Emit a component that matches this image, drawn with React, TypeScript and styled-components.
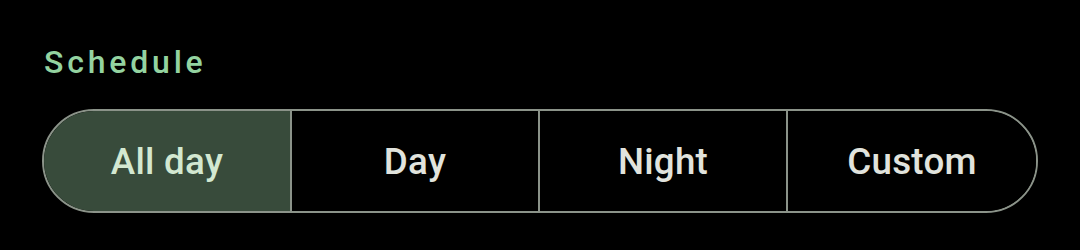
import React, { useState } from "react";
import styled, { createGlobalStyle } from "styled-components";

const Global = createGlobalStyle`
  html, body { margin: 0; padding: 0; background: #000; }
  body { font-family: Roboto, "Noto Sans", sans-serif; }
`;

const Page = styled.div`
  width: 1080px;
  height: 250px;
  background: #000;
  box-sizing: border-box;
  padding: 42px 42px 0 42px;
  display: flex;
  flex-direction: column;
`;

const Label = styled.div`
  color: #94d3a0;
  font-size: 32px;
  font-weight: 500;
  letter-spacing: 3.8px;
  line-height: 40px;
  padding-left: 2px;
  margin-bottom: 27px;
`;

const Group = styled.div`
  display: grid;
  grid-template-columns: repeat(4, 1fr);
  height: 104px;
  border: 2px solid #8b9389;
  border-radius: 52px;
  overflow: hidden;
  box-sizing: border-box;
`;

const Segment = styled.button<{ $selected: boolean; $last: boolean }>`
  appearance: none;
  border: none;
  border-right: ${(p) => (p.$last ? "none" : "2px solid #8b9389")};
  margin: 0;
  padding: 0;
  background: ${(p) => (p.$selected ? "#384b3b" : "#000")};
  color: ${(p) => (p.$selected ? "#d3e8d1" : "#e1e3dd")};
  font-family: Roboto, "Noto Sans", sans-serif;
  font-size: 36.75px;
  font-weight: 500;
  letter-spacing: 0.26px;
  cursor: pointer;
  display: flex;
  align-items: center;
  justify-content: center;
`;

const options = ["All day", "Day", "Night", "Custom"];

export default function App() {
  const [sel, setSel] = useState(0);
  return (
    <>
      <Global />
      <Page>
        <Label>Schedule</Label>
        <Group>
          {options.map((o, i) => (
            <Segment key={o} $selected={sel === i} $last={i === options.length - 1} onClick={() => setSel(i)}>
              {o}
            </Segment>
          ))}
        </Group>
      </Page>
    </>
  );
}
